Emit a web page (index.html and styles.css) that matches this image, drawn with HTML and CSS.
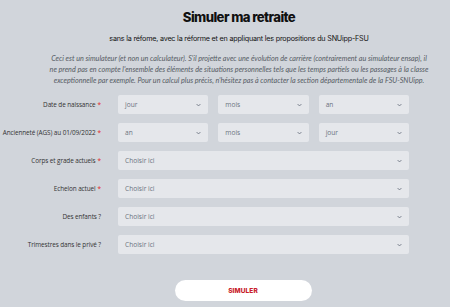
FILE: index.html
```html
<!DOCTYPE html>
<html lang="fr">
<head>
<meta charset="utf-8">
<link rel="stylesheet" href="styles.css">
</head>
<body>
<main class="page">
  <header class="head">
    <h1 class="title">Simuler ma retraite</h1>
    <p class="subtitle">sans la réfome, avec la réforme et en appliquant les propositions du SNUipp-FSU</p>
    <p class="intro">Ceci est un simulateur (et non un calculateur). S'il projette avec une évolution de carrière (contrairement au simulateur ensap), il<br>ne prend pas en compte l'ensemble des éléments de situations personnelles tels que les temps partiels ou les passages à la classe<br>exceptionnelle par exemple. Pour un calcul plus précis, n'hésitez pas à contacter la section départementale de la FSU-SNUipp.</p>
  </header>

  <form class="form">
    <div class="row">
      <label class="label">Date de naissance <span class="req">*</span></label>
      <div class="fields three">
        <div class="select"><span>jour</span><svg class="chev" viewBox="0 0 8 5"><path d="M1 1l3 3 3-3"/></svg></div>
        <div class="select"><span>mois</span><svg class="chev" viewBox="0 0 8 5"><path d="M1 1l3 3 3-3"/></svg></div>
        <div class="select"><span>an</span><svg class="chev" viewBox="0 0 8 5"><path d="M1 1l3 3 3-3"/></svg></div>
      </div>
    </div>
    <div class="row">
      <label class="label">Ancienneté (AGS) au 01/09/2022 <span class="req">*</span></label>
      <div class="fields three">
        <div class="select"><span>an</span><svg class="chev" viewBox="0 0 8 5"><path d="M1 1l3 3 3-3"/></svg></div>
        <div class="select"><span>mois</span><svg class="chev" viewBox="0 0 8 5"><path d="M1 1l3 3 3-3"/></svg></div>
        <div class="select"><span>jour</span><svg class="chev" viewBox="0 0 8 5"><path d="M1 1l3 3 3-3"/></svg></div>
      </div>
    </div>
    <div class="row">
      <label class="label">Corps et grade actuels <span class="req">*</span></label>
      <div class="fields">
        <div class="select"><span>Choisir ici</span><svg class="chev" viewBox="0 0 8 5"><path d="M1 1l3 3 3-3"/></svg></div>
      </div>
    </div>
    <div class="row">
      <label class="label">Echelon actuel <span class="req">*</span></label>
      <div class="fields">
        <div class="select"><span>Choisir ici</span><svg class="chev" viewBox="0 0 8 5"><path d="M1 1l3 3 3-3"/></svg></div>
      </div>
    </div>
    <div class="row">
      <label class="label">Des enfants ?</label>
      <div class="fields">
        <div class="select"><span>Choisir ici</span><svg class="chev" viewBox="0 0 8 5"><path d="M1 1l3 3 3-3"/></svg></div>
      </div>
    </div>
    <div class="row">
      <label class="label">Trimestres dans le privé ?</label>
      <div class="fields">
        <div class="select"><span>Choisir ici</span><svg class="chev" viewBox="0 0 8 5"><path d="M1 1l3 3 3-3"/></svg></div>
      </div>
    </div>
    <div class="actions">
      <button type="button" class="btn">SIMULER</button>
    </div>
  </form>
</main>
</body>
</html>
```

FILE: styles.css
```css
* { box-sizing: border-box; }
html, body { margin: 0; padding: 0; }
body {
  background: #d1d5db;
  width: 450px;
  height: 307px;
  overflow: hidden;
  font-family: "Open Sans", "Liberation Sans", sans-serif;
}
.page {
  display: flex;
  flex-direction: column;
  padding-top: 9px;
}
.head {
  display: flex;
  flex-direction: column;
  align-items: center;
  padding-left: 28px;
}
.title {
  margin: 0;
  font-family: "Inter", "DejaVu Sans", sans-serif;
  font-weight: 800;
  font-size: 13.2px;
  line-height: 17px;
  color: #111;
  letter-spacing: -0.6px;
}
.subtitle {
  margin: 8px 0 0;
  font-family: "Inter", "DejaVu Sans", sans-serif;
  font-size: 7.2px;
  line-height: 10px;
  color: #111;
  letter-spacing: -0.2px;
}
.intro {
  margin: 9px 0 0;
  text-align: center;
  white-space: nowrap;
  font-family: "Lato", "Open Sans", sans-serif;
  font-style: italic;
  font-size: 7.2px;
  line-height: 11px;
  color: #555b63;
}
.form {
  width: 450px;
  margin-top: 9px;
  display: flex;
  flex-direction: column;
  gap: 9px;
}
.row {
  display: flex;
  align-items: center;
  height: 19px;
}
.label {
  width: 101px;
  flex: none;
  display: flex;
  justify-content: flex-end;
  gap: 2px;
  font-size: 6.4px;
  color: #333;
  margin-right: 17px;
  white-space: nowrap;
  letter-spacing: -0.1px;
}
.req { color: #e11d2a; }
.fields {
  width: 291px;
  display: flex;
  gap: 10px;
  height: 19px;
}
.fields .select { flex: 1; }
.select {
  background: #e5e7eb;
  border-radius: 2px;
  height: 19px;
  display: flex;
  align-items: center;
  justify-content: space-between;
  padding: 0 7px 0 7px;
  font-size: 6.6px;
  color: #6b7280;
}
.chev {
  width: 5px;
  height: 4px;
  fill: none;
  stroke: #6b7280;
  stroke-width: 1.4;
}
.actions {
  display: flex;
  justify-content: center;
  padding-left: 36px;
  margin-top: 17px;
}
.btn {
  width: 137px;
  height: 21px;
  border: none;
  border-radius: 11px;
  background: #fff;
  color: #c8202a;
  font-family: "Inter", "DejaVu Sans", sans-serif;
  font-weight: 800;
  font-size: 6.5px;
  letter-spacing: 0.1px;
  padding: 0;
}
```
